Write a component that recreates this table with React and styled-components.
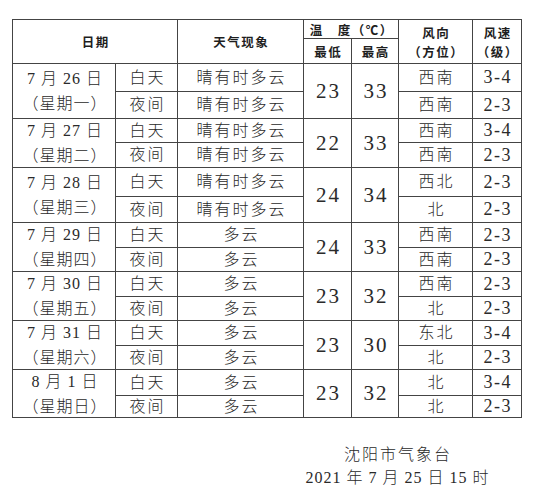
import React from "react";
import styled, { createGlobalStyle } from "styled-components";

const GlobalStyle = createGlobalStyle`
  html, body {
    margin: 0;
    padding: 0;
    background: #ffffff;
  }
  body {
    font-family: "Liberation Serif", "Noto Sans CJK SC", serif;
    color: #222;
  }
`;

const Page = styled.div`
  width: 538px;
  height: 500px;
  padding: 19px 0 0 12px;
  box-sizing: border-box;
  background: #fff;
`;

const Grid = styled.div`
  display: grid;
  width: fit-content;
  grid-template-columns: 102px 61px 125px 47px 46px 73px 48px;
  grid-template-rows: 18px 24px 27px 26px 23px 24px 28px 25px 24px 23px 24px 23px 24px 23px 25px 21px;
  gap: 1px;
  padding: 1px;
  background: #444;
`;

const Cell = styled.div`
  background: #fff;
  display: flex;
  flex-direction: column;
  align-items: center;
  justify-content: center;
  grid-column: ${(p) => (p.$cols ? `span ${p.$cols}` : "auto")};
  grid-row: ${(p) => (p.$rows ? `span ${p.$rows}` : "auto")};
`;

const Head = styled.span`
  font-family: "Noto Sans CJK SC", sans-serif;
  font-weight: 700;
  font-size: 12.5px;
  line-height: 19px;
  letter-spacing: 1.5px;
  padding-left: 1.5px;
  color: #1e1e1e;
`;

const Text = styled.span`
  font-size: 16px;
  font-weight: 300;
  line-height: 20px;
  letter-spacing: 2px;
  padding-left: 2px;
  color: #2a2a2a;
`;

const DateLine = styled.span`
  font-size: 16px;
  font-weight: 300;
  line-height: 25px;
  letter-spacing: 1px;
  padding-left: 2px;
  color: #2a2a2a;
`;

const Temp = styled.span`
  font-size: 21px;
  letter-spacing: 2px;
  padding-left: 2px;
  color: #2a2a2a;
`;

const Speed = styled.span`
  font-size: 18px;
  letter-spacing: 1.5px;
  padding-left: 1.5px;
  color: #2a2a2a;
`;

const Footer = styled.div`
  display: flex;
  flex-direction: column;
  align-items: center;
  width: 220px;
  margin: 25px 0 0 275px;
  font-size: 16px;
  font-weight: 300;
  line-height: 23px;
  color: #2a2a2a;
`;

const FooterLine = styled.span`
  letter-spacing: ${(p) => p.$spacing}px;
  padding-left: ${(p) => p.$spacing}px;
`;

const days = [
  { d: "7 月 26 日", w: "（星期一）", day: "晴有时多云", night: "晴有时多云", lo: "23", hi: "33", dd: "西南", dn: "西南", sd: "3-4", sn: "2-3" },
  { d: "7 月 27 日", w: "（星期二）", day: "晴有时多云", night: "晴有时多云", lo: "22", hi: "33", dd: "西南", dn: "西南", sd: "3-4", sn: "2-3" },
  { d: "7 月 28 日", w: "（星期三）", day: "晴有时多云", night: "晴有时多云", lo: "24", hi: "34", dd: "西北", dn: "北", sd: "2-3", sn: "2-3" },
  { d: "7 月 29 日", w: "（星期四）", day: "多云", night: "多云", lo: "24", hi: "33", dd: "西南", dn: "西南", sd: "2-3", sn: "2-3" },
  { d: "7 月 30 日", w: "（星期五）", day: "多云", night: "多云", lo: "23", hi: "32", dd: "西南", dn: "北", sd: "2-3", sn: "2-3" },
  { d: "7 月 31 日", w: "（星期六）", day: "多云", night: "多云", lo: "23", hi: "30", dd: "东北", dn: "北", sd: "3-4", sn: "2-3" },
  { d: "8 月 1 日", w: "（星期日）", day: "多云", night: "多云", lo: "23", hi: "32", dd: "北", dn: "北", sd: "3-4", sn: "2-3" },
];

export default function App() {
  return (
    <Page>
      <GlobalStyle />
      <Grid>
        <Cell $cols={2} $rows={2}>
          <Head>日期</Head>
        </Cell>
        <Cell $rows={2}>
          <Head>天气现象</Head>
        </Cell>
        <Cell $cols={2}>
          <Head>温　度（℃）</Head>
        </Cell>
        <Cell $rows={2}>
          <Head>风向</Head>
          <Head>（方位）</Head>
        </Cell>
        <Cell $rows={2}>
          <Head>风速</Head>
          <Head>（级）</Head>
        </Cell>
        <Cell>
          <Head>最低</Head>
        </Cell>
        <Cell>
          <Head>最高</Head>
        </Cell>

        {days.map((r) => (
          <React.Fragment key={r.d}>
            <Cell $rows={2}>
              <DateLine>{r.d}</DateLine>
              <DateLine>{r.w}</DateLine>
            </Cell>
            <Cell><Text>白天</Text></Cell>
            <Cell><Text>{r.day}</Text></Cell>
            <Cell $rows={2}><Temp>{r.lo}</Temp></Cell>
            <Cell $rows={2}><Temp>{r.hi}</Temp></Cell>
            <Cell><Text>{r.dd}</Text></Cell>
            <Cell><Speed>{r.sd}</Speed></Cell>
            <Cell><Text>夜间</Text></Cell>
            <Cell><Text>{r.night}</Text></Cell>
            <Cell><Text>{r.dn}</Text></Cell>
            <Cell><Speed>{r.sn}</Speed></Cell>
          </React.Fragment>
        ))}
      </Grid>
      <Footer>
        <FooterLine $spacing={2}>沈阳市气象台</FooterLine>
        <FooterLine $spacing={1}>2021 年 7 月 25 日 15 时</FooterLine>
      </Footer>
    </Page>
  );
}
